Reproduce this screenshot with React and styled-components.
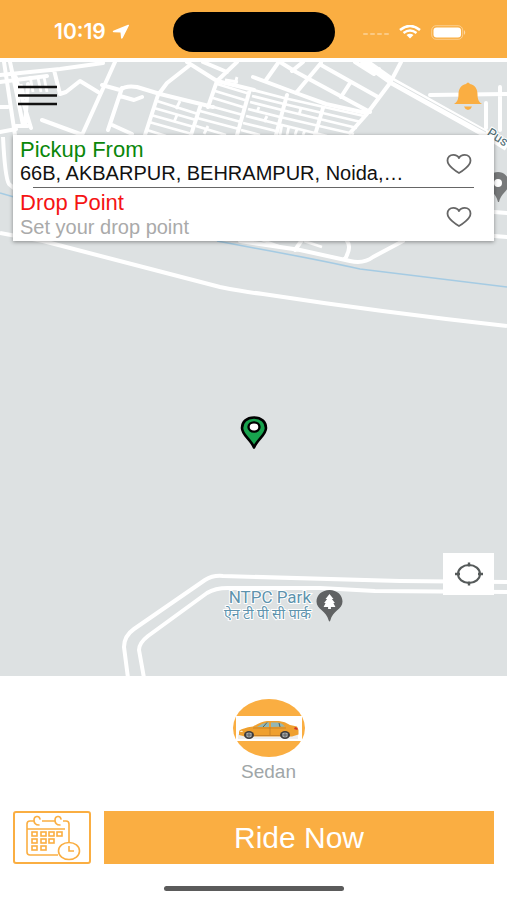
import styled, { createGlobalStyle } from "styled-components";

const GlobalStyle = createGlobalStyle`
  * {
    box-sizing: border-box;
  }
  body {
    margin: 0;
    background: #ffffff;
    font-family: "Liberation Sans", Arial, sans-serif;
  }
  button,
  input {
    font-family: inherit;
  }
`;

const Screen = styled.div`
  display: flex;
  flex-direction: column;
  min-height: 100vh;
  overflow: hidden;
`;

// Status bar
const StatusBar = styled.header`
  display: grid;
  grid-template-columns: 1fr auto 1fr;
  align-items: center;
  height: 58px;
  padding: 6px 40px 0 54px;
  background: #faae42;
  color: #ffffff;
`;

const Clock = styled.div`
  display: flex;
  align-items: center;
  gap: 6px;
  font: 600 21px/24px Inter, "Liberation Sans", sans-serif;
`;

const Island = styled.div`
  width: 162px;
  height: 40px;
  margin-left: -14px;
  border-radius: 20px;
  background: #000000;
`;

const StatusIcons = styled.div`
  display: flex;
  align-items: center;
  justify-content: flex-end;
  gap: 10px;
`;

// Map area
const MapArea = styled.main`
  position: relative;
  flex: 1;
  display: flex;
  flex-direction: column;
  margin-top: 4px;
  padding: 16px 13px 81px;
  background: #dde1e2;
`;

const MapCanvas = styled.svg`
  position: absolute;
  inset: 0;
  width: 100%;
  height: 100%;
`;

const TopBar = styled.nav`
  position: relative;
  display: flex;
  align-items: center;
  justify-content: space-between;
  height: 36px;
  margin-bottom: 21px;
  padding: 0 11px 0 5px;
`;

const IconButton = styled.button`
  display: flex;
  align-items: center;
  justify-content: center;
  padding: 0;
  border: 0;
  background: transparent;
  cursor: pointer;
`;

const LocateButton = styled(IconButton)`
  position: relative;
  align-self: flex-end;
  width: 51px;
  height: 42px;
  margin-top: auto;
  background: #ffffff;
`;

const TripCard = styled.form`
  position: relative;
  padding: 0 20px 0 7px;
  background: #ffffff;
  box-shadow: 0 1px 4px rgba(0, 0, 0, 0.4);
`;

const Stop = styled.div`
  display: flex;
  align-items: center;
  justify-content: space-between;
  height: ${(props) => (props.$last ? 53 : 52)}px;
  padding-right: 2px;
`;

const StopField = styled.div`
  flex: 1;
  min-width: 0;
  margin-right: 24px;
`;

const StopLabel = styled.label`
  display: block;
  font-size: 22px;
  line-height: 25px;
  color: ${(props) => props.$color};
`;

const StopInput = styled.input`
  display: block;
  width: 100%;
  height: 24px;
  padding: 0;
  border: 0;
  outline: 0;
  background: transparent;
  font-size: 20px;
  color: #111111;
  text-overflow: ellipsis;

  &::placeholder {
    color: #aaaaaa;
    opacity: 1;
  }
`;

const HeartButton = styled(IconButton)`
  padding-top: 5px;
`;

const Divider = styled.hr`
  height: 1px;
  margin: 0 0 0 13px;
  border: 0;
  background: #666666;
`;

// Booking panel
const Panel = styled.footer`
  padding: 23px 13px 9px;
  background: #ffffff;
`;

const VehicleButton = styled.button`
  display: flex;
  flex-direction: column;
  align-items: center;
  gap: 4px;
  margin: 0 auto 28px;
  padding: 0 0 0 30px;
  border: 0;
  background: transparent;
  color: #9fa6a8;
  font-size: 19px;
  line-height: 22px;
  cursor: pointer;
`;

const Actions = styled.div`
  display: flex;
  gap: 13px;
`;

const ScheduleButton = styled(IconButton)`
  width: 78px;
  height: 53px;
  border: 2px solid #faae42;
  border-radius: 3px;
`;

const RideButton = styled.button`
  flex: 1;
  height: 53px;
  border: 0;
  background: #faae42;
  color: #ffffff;
  font-size: 30px;
  cursor: pointer;
`;

const HomeIndicator = styled.div`
  width: 180px;
  height: 5px;
  margin: 22px auto 0;
  border-radius: 3px;
  background: #5b5b5b;
`;

const roads = [
  "M4 62 L15 135",
  "M10 62 L17 95 L23 125",
  "M0 75 L60 69 L103 63",
  "M0 82 L47 76",
  "M54 70 L60 94 L66 92 L80 81 L98 92",
  "M115 62 L82 135",
  "M102 85 L120 90 Q126 85 137 87 L160 94 L213 107",
  "M122 88 L108 130",
  "M110 124 L132 134",
  "M120 96 L134 100 L142 97",
  "M42 120 L80 134",
  "M190 65 L167 83 L158 95 L145 135",
  "M187 62 L217 81 L254 90",
  "M237 62 L217 81 L208 107",
  "M203 62 L227 72",
  "M278 63 L266 80",
  "M253 77 L296 93 L326 104 L366 113",
  "M280 62 L296 72 L370 112",
  "M303 62 L292 71",
  "M321 63 L296 93",
  "M321 65 L378 97",
  "M350 83 L341 97",
  "M401 62 L390 83 L366 115 L350 133",
  "M355 62 L374 74 L379 69",
  "M430 95 L507 94",
  "M500 87 L500 130",
  "M486 103 L486 128",
  "M15 75 L31 128 M28 84 L25 126 M16 126 L28 126",
  "M0 107 L8 107 M0 132 L16 129",
  "M200 107 L191 135",
  "M250 89 L237 135",
  "M287 95 L276 135",
  "M323 108 L315 135",
  "M253 243 L300 250 L350 261 Q364 264 373 257 L403 241",
  "M240 241 L300 250 M302 240 L295 250",
  "M347 241 Q352 247 345 259",
  "M494 212 L507 213 M494 236 L507 237",
];

const lanes = [
  "M157 101 L198 114",
  "M154 108 L196 120",
  "M151 115 L194 127",
  "M149 122 L192 134",
  "M147 130 L166 136",
  "M180 101 L176 109 M177 115 L174 122",
  "M217 84 L250 94",
  "M215 91 L248 101",
  "M213 98 L246 108",
  "M210 106 L243 115",
  "M200 111 L241 122",
  "M197 118 L239 129",
  "M196 126 L226 135",
  "M208 126 L204 134",
  "M253 90 L284 98 L364 116",
  "M252 96 L284 104 L361 122",
  "M250 102 L282 110 L357 128",
  "M248 109 L280 117 L354 134",
  "M246 116 L278 124 L327 136",
  "M243 123 L276 131",
  "M241 130 L260 135",
  "M259 107 L257 112 M267 116 L264 122 M301 108 L299 115",
  "M282 124 L280 135 M289 126 L287 135 M297 129 L295 135 M305 130 L303 135",
  "M237 77 L235 84 M225 80 L238 82",
  "M30 76 L33 92 M38 78 L41 92 M44 77 L47 92 M21 84 L25 99",
  "M262 240 L281 247 M304 241 L322 247",
];

function CityMap() {
  return (
    <MapCanvas viewBox="0 62 507 614" preserveAspectRatio="xMidYMid slice" aria-hidden="true">
      <g fill="none" stroke="#ffffff" strokeLinejoin="round">
        <path d={roads.join(" ")} strokeWidth="4" strokeLinecap="round" />
        <path d={lanes.join(" ")} strokeWidth="2.8" />
        <path d="M362 60 L393 82 L486 134 L507 147" strokeWidth="8" />
        <path d="M393 81 L486 132" stroke="#dde1e2" strokeWidth="1" />
        <path d="M3 137 Q5 178 9 184 L15 189" strokeWidth="4" />
        <path d="M0 233 L43 241 L143 267 L220 287 Q245 292 263 294 Q380 312 507 326" strokeWidth="4" />
        <path d="M128 678 L124 647 Q124 636 134 629 L205 580 Q213 575 223 576 L400 581 L507 582" strokeWidth="4" />
        <path d="M144 678 L139 650 Q139 643 148 636 L207 593 Q215 588 228 588 L320 588 L375 591 L507 592" strokeWidth="4" />
        <path d="M0 193 L14 197 M217 241 L254 248 Q320 260 360 269 L507 287" stroke="#a5cbe3" strokeWidth="1.6" />
      </g>

      <g fill="#77797a">
        <path d="M498 172 a11 11 0 0 1 11 11 c0 8 -7 9 -10 19 h-1 c-2 -10 -10 -11 -10 -19 a10 10 0 0 1 10 -11z" />
        <circle cx="498" cy="183" r="4" fill="#ffffff" />
      </g>
      <text
        x="486"
        y="135"
        transform="rotate(32 486 135)"
        fill="#4d6b73"
        stroke="#ffffff"
        strokeWidth="2"
        paintOrder="stroke"
        fontFamily="Roboto, sans-serif"
        fontSize="13"
      >
        Pus
      </text>

      <g
        fill="#5e93ad"
        stroke="#ffffff"
        strokeWidth="2"
        paintOrder="stroke"
        textAnchor="end"
        fontFamily="Roboto, 'Noto Sans', sans-serif"
      >
        <text x="311" y="603" fontSize="17">NTPC Park</text>
        <text x="311" y="619" fontSize="14">ऐन टी पी सी पार्क</text>
      </g>
      <path
        d="M329.500 590 c7.500 0 13 5 13 11.500 c0 8 -10 9 -12.200 19 q-0.800 2 -1.600 0 c-2.200 -10 -12.200 -11 -12.200 -19 c0 -6.500 5.500 -11.500 13 -11.500z"
        fill="#606263"
      />
      <path
        d="M329.500 594 l4 5 h-1.600 l3 4 h-1.500 l2 4 h-4.500 v2 h-2.800 v-2 h-4.500 l2 -4 h-1.500 l3 -4 h-1.600z"
        fill="#ffffff"
      />

      <path
        d="M254 417.500 c-7.500 0 -12 4.500 -12 10.500 c0 7 8.500 11 12 19.500 c3.500 -8.500 12 -12.500 12 -19.500 c0 -6 -4.500 -10.500 -12 -10.500z"
        fill="#18a34e"
        stroke="#000000"
        strokeWidth="2.600"
        strokeLinejoin="round"
      />
      <ellipse cx="254" cy="427" rx="5.500" ry="4.600" fill="#ffffff" stroke="#000000" strokeWidth="2.400" />
    </MapCanvas>
  );
}

function Heart() {
  return (
    <svg width="26" height="22" viewBox="0 0 26 22" fill="none" aria-hidden="true">
      <path
        d="M13 20 C11 19 1.500 13 1.500 7.500 C1.500 4 4 1.800 7.300 1.800 C10 1.800 12 3 13 5 C14 3 16 1.800 18.700 1.800 C22 1.800 24.500 4 24.500 7.500 C24.500 13 15 19 13 20z"
        stroke="#666666"
        strokeWidth="1.800"
        strokeLinejoin="round"
      />
    </svg>
  );
}

function Sedan() {
  return (
    <svg width="72" height="58" viewBox="0 0 72 58" aria-hidden="true">
      <ellipse cx="36" cy="29" rx="36" ry="29" fill="#faae42" />
      <rect x="3" y="17" width="66" height="25" fill="#ffffff" />
      <rect x="5" y="35" width="60" height="5" fill="#eeeeee" />
      <path
        d="M6 36 V32 Q9 29 20 27.500 Q28 22.500 34 22 H46 Q52 22.500 57 26 L64 27.500 L65.500 31 V35.500 L59 37.500 H12z"
        fill="#efa02f"
      />
      <path d="M24 28 Q29 24 34 23.500 H36 V28z M38 23.500 H45 Q49 24 52 27.500 L38 28z" fill="#93b7b5" />
      <path d="M30 28 L34 23.500 M46 24 L47 28" stroke="#4c6263" strokeWidth="1" />
      <path d="M37 28 V36 M21 36.500 H47 M20 29 H53" fill="none" stroke="#bd7926" strokeWidth="0.700" />
      <path d="M62 28 L64.500 29 V31 L61 30z" fill="#d1332e" />
      <path d="M6 33 L9 31.500 L10 33z" fill="#fff0ca" />
      {[16, 52].map((cx) => (
        <g key={cx}>
          <ellipse cx={cx} cy="36" rx="5" ry="4" fill="#3d3b3c" />
          <ellipse cx={cx} cy="36" rx="3" ry="2.400" fill="#aaaeb0" />
          <path d={`M${cx - 3} 36h6M${cx} 33.600v4.800`} stroke="#4a4a4a" strokeWidth="0.700" />
        </g>
      ))}
    </svg>
  );
}

const calendarDays = [
  [17, 19],
  [26, 19],
  [34, 19],
  [42, 19],
  [17, 26],
  [26, 26],
  [34, 26],
  [17, 33],
  [26, 33],
];

function CalendarClock() {
  return (
    <svg width="74" height="49" viewBox="-1 -1 74 49" fill="none" stroke="#faae42" strokeWidth="1.600" aria-hidden="true">
      <path d="M18 7 H14 Q11 7 11 10 V38 Q11 41 14 41 H42 M26 7 H39 M47 7 H50 Q53 7 53 10 V28 M11 15 H49" />
      <path d="M24 5 C23 1 18 2 18 6 C18 9 20 11 23 11 M45 5 C44 1 39 2 39 6 C39 9 41 11 44 11" strokeLinecap="round" />
      {calendarDays.map(([x, y]) => (
        <rect key={`${x}-${y}`} x={x - 1} y={y - 1} width="5" height="4" />
      ))}
      <ellipse cx="53" cy="37" rx="10.500" ry="8.500" fill="#ffffff" />
      <path d="M53 32 V37 H58" />
    </svg>
  );
}

function App() {
  return (
    <Screen>
      <GlobalStyle />
      <StatusBar>
        <Clock>
          <span>10:19</span>
          <svg width="18" height="16" viewBox="0 0 18 16" fill="#ffffff" aria-hidden="true">
            <path d="M17 1.500 Q17.300 0.500 16 0.800 L1.200 6.800 Q0 8 1.500 8.300 L8.500 8.500 L9 14 Q9.500 15.500 10.700 14z" />
          </svg>
        </Clock>
        <Island />
        <StatusIcons>
          <svg width="26" height="10" viewBox="0 -5 26 10" fill="#ffffff" opacity="0.35" aria-hidden="true">
            <rect x="0" y="1" width="5" height="2" rx="1" />
            <rect x="7" y="1" width="5" height="2" rx="1" />
            <rect x="14" y="1" width="5" height="2" rx="1" />
            <rect x="21" y="1" width="5" height="2" rx="1" />
          </svg>
          <svg width="22" height="14" viewBox="0 0 22 14" fill="none" stroke="#ffffff" aria-hidden="true">
            <path d="M1 5 Q11 -3 21 5" strokeWidth="2.600" />
            <path d="M4.500 8 Q11 3 17.500 8" strokeWidth="2.400" />
            <path d="M7.500 10 Q11 7.500 14.500 10 L11 13.500z" fill="#ffffff" stroke="none" />
          </svg>
          <svg width="36" height="15" viewBox="0 0 36 15" fill="#ffffff" aria-hidden="true">
            <rect x="0.700" y="0.700" width="31" height="13.600" rx="4.500" fill="none" stroke="#ffffff" opacity="0.400" />
            <rect x="2.500" y="2.500" width="27.500" height="10" rx="3" />
            <path d="M33 5 Q35.500 7.500 33 10z" opacity="0.500" />
          </svg>
        </StatusIcons>
      </StatusBar>

      <MapArea>
        <CityMap />
        <TopBar>
          <IconButton type="button" aria-label="Menu">
            <svg width="40" height="22" viewBox="0 0 40 22" aria-hidden="true">
              <path d="M0 2 H39 M0 10.500 H39 M0 19 H39" stroke="#111111" strokeWidth="2.400" />
            </svg>
          </IconButton>
          <IconButton type="button" aria-label="Notifications">
            <svg width="30" height="28" viewBox="0 0 30 28" fill="#faae42" aria-hidden="true">
              <path d="M13 2 Q15 -1 17 2 C22 3 24.500 7 24.500 12 C24.500 18 26 20 29 22 H1 C4 20 5.500 18 5.500 12 C5.500 7 8 3 13 2z" />
              <path d="M11 24.500 H19 Q18 27.500 15 28 Q12 27.500 11 24.500z" />
            </svg>
          </IconButton>
        </TopBar>

        <TripCard>
          <Stop>
            <StopField>
              <StopLabel htmlFor="pickup" $color="#0a870a">Pickup From</StopLabel>
              <StopInput id="pickup" defaultValue="66B, AKBARPUR, BEHRAMPUR, Noida,…" />
            </StopField>
            <HeartButton type="button" aria-label="Save pickup">
              <Heart />
            </HeartButton>
          </Stop>
          <Divider />
          <Stop $last>
            <StopField>
              <StopLabel htmlFor="drop" $color="#f51414">Drop Point</StopLabel>
              <StopInput id="drop" placeholder="Set your drop point" />
            </StopField>
            <HeartButton type="button" aria-label="Save drop point">
              <Heart />
            </HeartButton>
          </Stop>
        </TripCard>

        <LocateButton type="button" aria-label="My location">
          <svg width="30" height="24" viewBox="0 0 30 24" fill="none" stroke="#555a5a" aria-hidden="true">
            <ellipse cx="15" cy="12" rx="11" ry="9" strokeWidth="2" />
            <path d="M1 12 H6 M24 12 H29 M15 0.500 V4.500 M15 19.500 V23.500" strokeWidth="2.400" />
          </svg>
        </LocateButton>
      </MapArea>

      <Panel>
        <VehicleButton type="button">
          <Sedan />
          Sedan
        </VehicleButton>
        <Actions>
          <ScheduleButton type="button" aria-label="Schedule a ride">
            <CalendarClock />
          </ScheduleButton>
          <RideButton type="button">Ride Now</RideButton>
        </Actions>
        <HomeIndicator />
      </Panel>
    </Screen>
  );
}

export default App;
